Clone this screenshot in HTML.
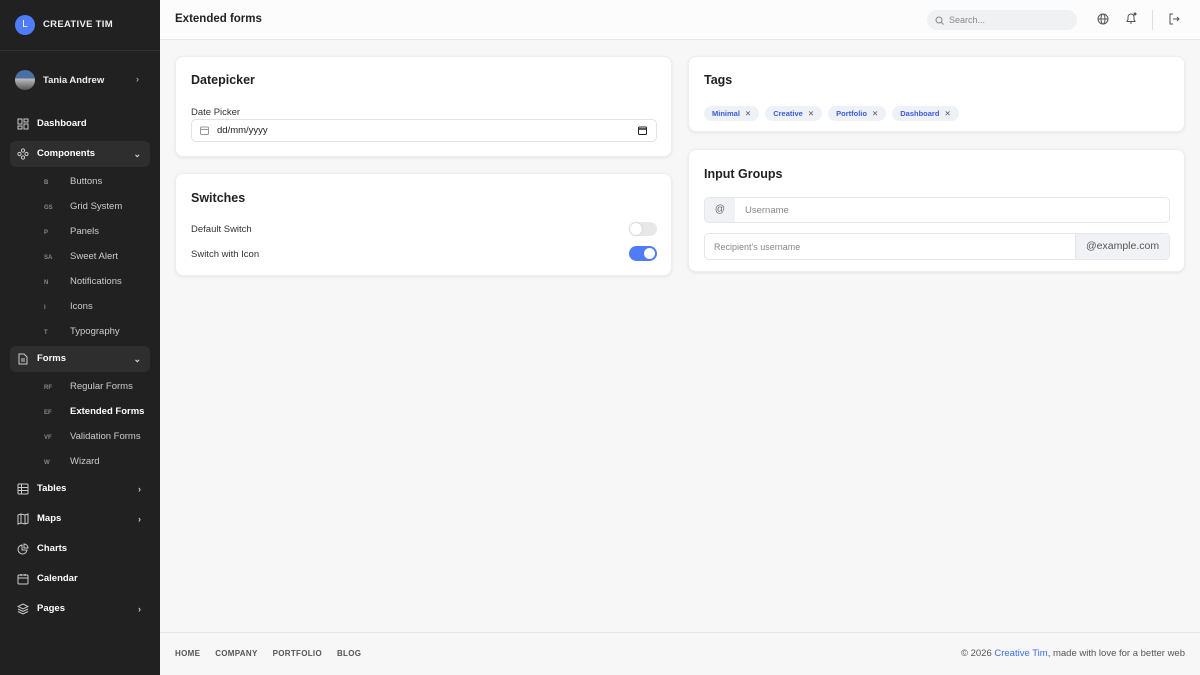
<!DOCTYPE html><html><head><meta charset="utf-8"><style>
*{box-sizing:border-box;margin:0;padding:0}
body{width:1200px;height:675px;overflow:hidden;font-family:"Liberation Sans",sans-serif;background:#f7f7f7;position:relative;color:#222}
.sb{position:absolute;left:0;top:0;width:160px;height:675px;background:#212121;color:#eee}
.abs{position:absolute}
.logo{left:15px;top:15px;width:20px;height:20px;border-radius:50%;background:#4f7df9;color:#fff;font-size:10px;text-align:center;line-height:20px}
.nav{left:10px;width:140px;height:26px;font-size:9.5px;font-weight:bold;color:#fff;line-height:26px;padding-left:27px}
.nav.act{background:#2e2e2e;border-radius:6px}
.nav svg{position:absolute;left:7px;top:7px}
.chev{position:absolute;right:9px;top:0;font-size:9px;color:#ccc}
.sub{left:44px;font-size:9.5px;color:#ccc;height:14px;line-height:14px}
.sub b{display:inline-block;width:26px;font-size:6px;color:#888}
.card{position:absolute;background:#fff;border-radius:8px;box-shadow:0 1px 3px rgba(0,0,0,.08);border:1px solid #eee}
h3{position:absolute;font-size:12.5px;font-weight:bold;color:#222}
.lbl{position:absolute;font-size:9.5px;color:#333}
.tag{display:inline-block;height:15px;line-height:15px;padding:0 8px;border-radius:8px;background:#eef1f6;color:#3b5bdb;font-size:7.5px;font-weight:bold;margin-right:6px}
.tag i{font-style:normal;color:#556;margin-left:5px;font-weight:normal}
</style></head><body>
<div class="sb">
<div class="abs logo">L</div>
<div class="abs" style="left:43px;top:19px;font-size:9.5px;font-weight:bold;letter-spacing:.3px">CREATIVE TIM</div>
<div class="abs" style="left:0;top:50px;width:160px;height:1px;background:#333"></div>
<div class="abs" style="left:15px;top:70px;width:20px;height:20px;border-radius:50%;background:linear-gradient(#4a6fa5 40%,#bbb 45%,#555)"></div>
<div class="abs" style="left:43px;top:75px;font-size:9.5px;font-weight:bold">Tania Andrew</div>
<div class="abs" style="left:136px;top:74px;font-size:9px;color:#ccc">›</div>
<div class="abs nav" style="top:111px"><svg width="12" height="12" viewBox="0 0 12 12" fill="none" stroke="#ccc"><rect x="1" y="1" width="4" height="5"/><rect x="7" y="1" width="4" height="3"/><rect x="1" y="8" width="4" height="3"/><rect x="7" y="6" width="4" height="5"/></svg>Dashboard</div>
<div class="abs nav act" style="top:141px"><svg width="12" height="12" viewBox="0 0 12 12" fill="none" stroke="#ccc"><circle cx="6" cy="2.5" r="1.6"/><circle cx="6" cy="9.5" r="1.6"/><circle cx="2.5" cy="6" r="1.6"/><circle cx="9.5" cy="6" r="1.6"/></svg>Components<span class="chev">⌄</span></div>
<div class="abs sub" style="top:175px"><b>B</b>Buttons</div>
<div class="abs sub" style="top:200px"><b>GS</b>Grid System</div>
<div class="abs sub" style="top:225px"><b>P</b>Panels</div>
<div class="abs sub" style="top:250px"><b>SA</b>Sweet Alert</div>
<div class="abs sub" style="top:275px"><b>N</b>Notifications</div>
<div class="abs sub" style="top:300px"><b>I</b>Icons</div>
<div class="abs sub" style="top:325px"><b>T</b>Typography</div>
<div class="abs nav act" style="top:346px"><svg width="12" height="12" viewBox="0 0 12 12" fill="none" stroke="#ccc"><path d="M2 1h5l3 3v7H2z M4 6h4 M4 8h4"/></svg>Forms<span class="chev">⌄</span></div>
<div class="abs sub" style="top:380px"><b>RF</b>Regular Forms</div>
<div class="abs sub" style="top:405px;color:#fff;font-weight:bold"><b>EF</b>Extended Forms</div>
<div class="abs sub" style="top:430px"><b>VF</b>Validation Forms</div>
<div class="abs sub" style="top:455px"><b>W</b>Wizard</div>
<div class="abs nav" style="top:476px"><svg width="12" height="12" viewBox="0 0 12 12" fill="none" stroke="#ccc"><rect x="1" y="1" width="10" height="10" rx="1"/><path d="M1 4.5h10M1 7.5h10M4.5 1v10"/></svg>Tables<span class="chev">›</span></div>
<div class="abs nav" style="top:506px"><svg width="12" height="12" viewBox="0 0 12 12" fill="none" stroke="#ccc"><path d="M1 2l3-1 4 1 3-1v9l-3 1-4-1-3 1z M4 1v9 M8 2v9"/></svg>Maps<span class="chev">›</span></div>
<div class="abs nav" style="top:536px"><svg width="12" height="12" viewBox="0 0 12 12" fill="none" stroke="#ccc"><path d="M5 2a4.5 4.5 0 1 0 5 5H5z M7 1v4h4A4 4 0 0 0 7 1z"/></svg>Charts</div>
<div class="abs nav" style="top:566px"><svg width="12" height="12" viewBox="0 0 12 12" fill="none" stroke="#ccc"><rect x="1" y="2" width="10" height="9" rx="1"/><path d="M1 5h10M4 1v2M8 1v2"/></svg>Calendar</div>
<div class="abs nav" style="top:596px"><svg width="12" height="12" viewBox="0 0 12 12" fill="none" stroke="#ccc"><path d="M6 1l5 2.5-5 2.5-5-2.5z M1 6l5 2.5 5-2.5 M1 8.5l5 2.5 5-2.5"/></svg>Pages<span class="chev">›</span></div>
</div>
<div class="abs" style="left:160px;top:0;width:1040px;height:40px;background:#fcfcfc;border-bottom:1px solid #e6e6e6"></div>
<div class="abs" style="left:175px;top:13px;font-size:11.5px;font-weight:bold">Extended forms</div>
<div class="abs" style="left:927px;top:10px;width:150px;height:20px;border-radius:10px;background:#f0f1f3;font-size:9px;color:#888;line-height:20px;padding-left:22px">Search...
<svg class="abs" style="left:8px;top:6px" width="9" height="9" viewBox="0 0 9 9" fill="none" stroke="#888"><circle cx="4" cy="4" r="3"/><path d="M6 6l2.5 2.5"/></svg></div>
<svg class="abs" style="left:1097px;top:13px" width="12" height="12" viewBox="0 0 12 12" fill="none" stroke="#555"><circle cx="6" cy="6" r="5"/><ellipse cx="6" cy="6" rx="2" ry="5"/><path d="M1 6h10"/></svg>
<svg class="abs" style="left:1125px;top:12px" width="12" height="13" viewBox="0 0 12 13" fill="none" stroke="#555"><path d="M2 9.5h8l-1-2V5a3 3 0 0 0-6 0v2.5z M5 11h2"/><circle cx="10" cy="2" r="1" fill="#555"/></svg>
<div class="abs" style="left:1152px;top:10px;width:1px;height:20px;background:#ddd"></div>
<svg class="abs" style="left:1168px;top:13px" width="12" height="12" viewBox="0 0 12 12" fill="none" stroke="#555"><path d="M5 1H2v10h3 M5 6h6 M9 4l2 2-2 2"/></svg>

<div class="card" style="left:175px;top:56px;width:497px;height:101px">
<h3 style="left:15px;top:16px">Datepicker</h3>
<div class="lbl" style="left:15px;top:50px">Date Picker</div>
<div class="abs" style="left:15px;top:62px;width:466px;height:23px;border:1px solid #e3e3e3;border-radius:5px;font-size:9.5px;line-height:21px;padding-left:25px;color:#222">dd/mm/yyyy
<svg class="abs" style="left:8px;top:6px" width="9" height="9" viewBox="0 0 9 9" fill="none" stroke="#999"><rect x=".5" y="1" width="8" height="7.5" rx="1"/><path d="M.5 3.5h8"/></svg>
<svg class="abs" style="right:9px;top:6px" width="9" height="9" viewBox="0 0 9 9" fill="none" stroke="#222"><rect x=".5" y="1" width="8" height="7.5" rx="1"/><path d="M.5 3h8" stroke-width="1.5"/></svg></div>
</div>
<div class="card" style="left:175px;top:173px;width:497px;height:103px">
<h3 style="left:15px;top:17px">Switches</h3>
<div class="lbl" style="left:15px;top:50px">Default Switch</div>
<div class="lbl" style="left:15px;top:75px">Switch with Icon</div>
<div class="abs" style="left:453px;top:48px;width:28px;height:14px;border-radius:7px;background:#e8e8e8"><div class="abs" style="left:1px;top:1px;width:12px;height:12px;border-radius:50%;background:#fff;box-shadow:0 0 2px rgba(0,0,0,.2)"></div></div>
<div class="abs" style="left:453px;top:72px;width:28px;height:15px;border-radius:8px;background:#4f7df9"><div class="abs" style="left:15px;top:2px;width:11px;height:11px;border-radius:50%;background:#fff"></div></div>
</div>
<div class="card" style="left:688px;top:56px;width:497px;height:76px">
<h3 style="left:15px;top:16px">Tags</h3>
<div class="abs" style="left:15px;top:46px;white-space:nowrap"><span class="tag">Minimal<i>✕</i></span><span class="tag">Creative<i>✕</i></span><span class="tag">Portfolio<i>✕</i></span><span class="tag">Dashboard<i>✕</i></span></div>
</div>
<div class="card" style="left:688px;top:149px;width:497px;height:123px">
<h3 style="left:15px;top:17px">Input Groups</h3>
<div class="abs" style="left:15px;top:47px;width:466px;height:26px;border:1px solid #e6e6e6;border-radius:5px;overflow:hidden">
<div class="abs" style="left:0;top:0;width:30px;height:26px;background:#f1f2f5;font-size:10px;color:#666;text-align:center;line-height:24px">@</div>
<div class="abs" style="left:40px;top:7px;font-size:9.5px;color:#888">Username</div></div>
<div class="abs" style="left:15px;top:83px;width:466px;height:27px;border:1px solid #e6e6e6;border-radius:5px;overflow:hidden">
<div class="abs" style="left:9px;top:8px;font-size:9px;color:#888">Recipient's username</div>
<div class="abs" style="right:0;top:0;width:94px;height:27px;background:#f1f2f5;border-left:1px solid #e6e6e6;font-size:10.5px;color:#555;line-height:25px;padding-left:10px">@example.com</div></div>
</div>
<div class="abs" style="left:160px;top:632px;width:1040px;height:1px;background:#e6e6e6"></div>
<div class="abs" style="left:175px;top:649px;font-size:8px;color:#555;font-weight:bold;letter-spacing:.3px">HOME<span style="margin-left:15px">COMPANY</span><span style="margin-left:15px">PORTFOLIO</span><span style="margin-left:15px">BLOG</span></div>
<div class="abs" style="right:15px;top:648px;font-size:9.5px;color:#555">© 2026 <span style="color:#3b6cf6">Creative Tim</span>, made with love for a better web</div>
</body></html>
